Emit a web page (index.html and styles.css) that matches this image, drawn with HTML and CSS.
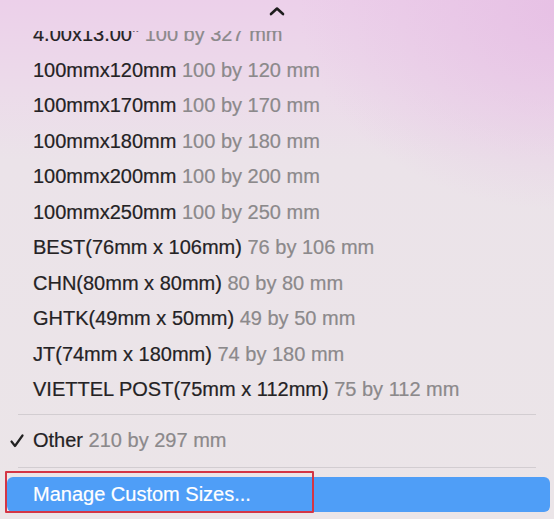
FILE: index.html
```html
<!DOCTYPE html>
<html>
<head>
<meta charset="utf-8">
<link rel="stylesheet" href="styles.css">
</head>
<body>
<div class="menu">
  <div class="scroll-up">
    <svg class="chev" width="16" height="10" viewBox="0 0 16 10"><path d="M2 8 L8 2.5 L14 8" fill="none" stroke="#1e1e1e" stroke-width="2.6" stroke-linecap="round" stroke-linejoin="round"/></svg>
  </div>
  <div class="list-clip">
    <ul class="list">
      <li class="item"><span class="name">4.00x13.00"</span> <span class="dim">100 by 327 mm</span></li>
      <li class="item"><span class="name">100mmx120mm</span> <span class="dim">100 by 120 mm</span></li>
      <li class="item"><span class="name">100mmx170mm</span> <span class="dim">100 by 170 mm</span></li>
      <li class="item"><span class="name">100mmx180mm</span> <span class="dim">100 by 180 mm</span></li>
      <li class="item"><span class="name">100mmx200mm</span> <span class="dim">100 by 200 mm</span></li>
      <li class="item"><span class="name">100mmx250mm</span> <span class="dim">100 by 250 mm</span></li>
      <li class="item"><span class="name">BEST(76mm x 106mm)</span> <span class="dim">76 by 106 mm</span></li>
      <li class="item"><span class="name">CHN(80mm x 80mm)</span> <span class="dim">80 by 80 mm</span></li>
      <li class="item"><span class="name">GHTK(49mm x 50mm)</span> <span class="dim">49 by 50 mm</span></li>
      <li class="item"><span class="name">JT(74mm x 180mm)</span> <span class="dim">74 by 180 mm</span></li>
      <li class="item"><span class="name">VIETTEL POST(75mm x 112mm)</span> <span class="dim">75 by 112 mm</span></li>
    </ul>
  </div>
  <div class="sep"></div>
  <div class="item checked">
    <svg class="check" width="14" height="14" viewBox="0 0 14 14"><path d="M1.5 7.5 L5 12 L12.5 1.5" fill="none" stroke="#222" stroke-width="2.2" stroke-linecap="round" stroke-linejoin="round"/></svg>
    <span class="name">Other</span> <span class="dim">210 by 297 mm</span>
  </div>
  <div class="sep sep2"></div>
  <div class="action-wrap">
    <div class="item action">Manage Custom Sizes...</div>
    <div class="annot"></div>
  </div>
</div>
</body>
</html>
```

FILE: styles.css
```css
html, body {
  margin: 0;
  padding: 0;
  width: 554px;
  height: 519px;
  overflow: hidden;
}
body {
  font-family: "Liberation Sans", Arial, sans-serif;
  background:
    radial-gradient(ellipse 260px 200px at 560px 10px, rgba(230, 190, 228, 0.85), rgba(230, 190, 228, 0) 100%),
    linear-gradient(to bottom, #ecd0ea 0px, #ecdbea 90px, #ebe3e9 160px, #ebe5e8 519px);
}
.menu {
  width: 554px;
  height: 519px;
  display: flex;
  flex-direction: column;
}
.scroll-up {
  height: 31px;
  display: flex;
  justify-content: center;
  align-items: flex-start;
}
.chev {
  margin-top: 6px;
}
.list-clip {
  overflow: hidden;
  height: 374.75px;
}
.list {
  list-style: none;
  margin: -13.75px 0 0 0;
  padding: 0;
}
.item {
  height: 35.5px;
  line-height: 35.5px;
  font-size: 20px;
  padding-left: 33px;
  color: #242224;
  white-space: nowrap;
  position: relative;
  -webkit-text-stroke: 0.2px currentColor;
}
.dim {
  color: #8b898b;
}
.sep {
  height: 1px;
  background: #d2cdd1;
  margin: 8px 18px 8.25px 18px;
}
.sep2 {
  margin: 8.25px 18px 9px 18px;
}
.check {
  position: absolute;
  left: 10px;
  top: 11px;
}
.action-wrap {
  position: relative;
  padding: 0 4px 0 7px;
}
.action {
  background: #4f9ef7;
  color: #ffffff;
  border-radius: 6px;
  padding-left: 26px;
}
.annot {
  position: absolute;
  left: 5px;
  top: -6px;
  width: 305px;
  height: 38px;
  border: 2px solid #d43545;
  border-radius: 1px;
}
```
